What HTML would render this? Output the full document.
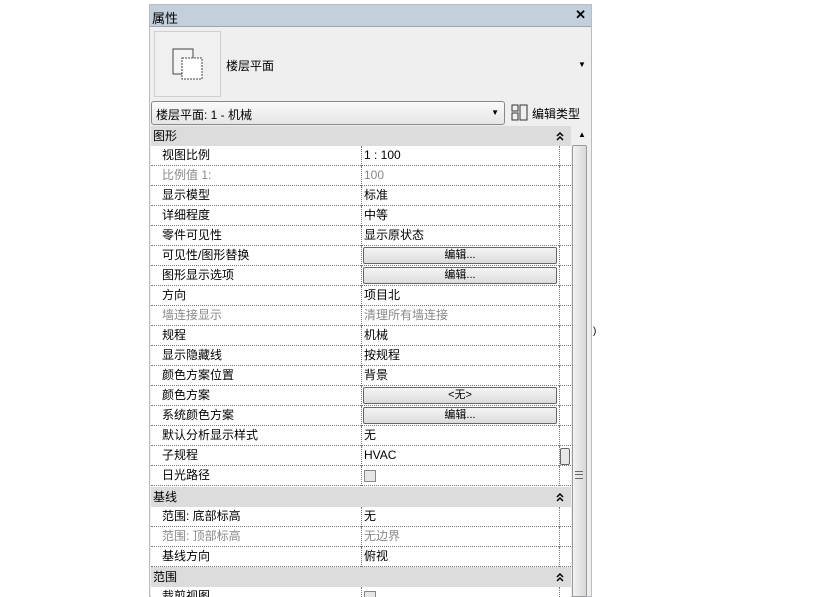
<!DOCTYPE html><html style="overflow:hidden;width:820px;height:597px"><head><meta charset="utf-8"><style>
*{margin:0;padding:0;box-sizing:border-box}
body{width:820px;height:597px;background:#fff;position:relative;overflow:hidden;font-family:"Liberation Sans","Noto Sans CJK SC",sans-serif;font-size:12px;color:#000}
.a{position:absolute}
.row{position:absolute;left:151px;width:420px;height:20px;border-bottom:1px dotted #777;line-height:19px}
.row .n{position:absolute;left:11px;top:0}
.row .v{position:absolute;left:210px;top:0;width:198px;height:20px;border-left:1px dotted #777;padding:0 0 0 2px}
.row .e{position:absolute;left:408px;top:0;height:20px;border-left:1px dotted #777}
.g{color:#888}
.grp{position:absolute;left:151px;width:420px;height:20px;background:#dcdcdc;padding:0 0 0 2px;line-height:20px}
.grp svg{position:absolute;right:7px;top:5px}
.btn{position:absolute;left:1px;top:1px;width:194px;height:17px;border:1px solid #666;border-radius:2px;background:linear-gradient(#f4f4f4,#dcdcdc);text-align:center;font-size:11px;line-height:15px}
</style></head><body>
<div class="a" style="left:149px;top:4px;width:443px;height:593px;background:#efeff0;border:1px solid #b8bcc4"></div>
<div class="a" style="left:150px;top:5px;width:441px;height:22px;background:#c3cfdb;border-bottom:1px solid #9aa6b2;font-size:13px;padding:3px 0 0 2px">属性<span style="position:absolute;right:5px;top:2px;font-weight:bold">✕</span></div>
<div class="a" style="left:154px;top:31px;width:67px;height:66px;border:1px solid #d0d0d0;background:#f0f0f0"></div>
<svg class="a" style="left:172px;top:46px" width="34" height="34"><rect x="1" y="3" width="20" height="25" fill="#f4f4f4" stroke="#444"/><rect x="10" y="12" width="20" height="21" fill="#fff" stroke="#444" stroke-dasharray="2,1"/></svg>
<div class="a" style="left:226px;top:57px">楼层平面</div>
<div class="a" style="left:578px;top:60px;font-size:8px">▼</div>
<div class="a" style="left:151px;top:101px;width:354px;height:24px;border:1px solid #888;border-radius:3px;background:linear-gradient(#fafafa,#e6e6e6);padding:4px 0 0 4px">楼层平面: 1 - 机械<span style="position:absolute;right:5px;top:6px;font-size:8px">▼</span></div>
<svg class="a" style="left:511px;top:104px" width="18" height="18"><rect x="1" y="1" width="6" height="6" fill="none" stroke="#333"/><rect x="1" y="9" width="6" height="7" fill="none" stroke="#333"/><rect x="9" y="1" width="7" height="15" fill="none" stroke="#333"/></svg>
<div class="a" style="left:532px;top:105px">编辑类型</div>
<div class="grp" style="top:126px">图形<svg width="8" height="10"><path d="M1 5L4 2L7 5M1 9L4 6L7 9" fill="none" stroke="#000" stroke-width="1.5"/></svg></div>
<div class="a" style="left:578px;top:130px;font-size:8px">▲</div>
<div class="a" style="left:572px;top:145px;width:15px;height:452px;border:1px solid #999;border-radius:2px;background:linear-gradient(90deg,#f2f2f2,#d8d8d8)"></div>
<div class="a" style="left:575px;top:471px;width:8px;height:8px;border-top:1px solid #666;border-bottom:1px solid #666"><div style="margin-top:2px;border-top:1px solid #666"></div></div>
<div class="a" style="left:151px;top:146px;width:420px;height:341px;background:#fff"></div>
<div class="row" style="top:146px"><span class="n">视图比例</span><span class="v">1 : 100</span><span class="e"></span></div>
<div class="row" style="top:166px"><span class="n g">比例值 1:</span><span class="v g">100</span><span class="e"></span></div>
<div class="row" style="top:186px"><span class="n">显示模型</span><span class="v">标准</span><span class="e"></span></div>
<div class="row" style="top:206px"><span class="n">详细程度</span><span class="v">中等</span><span class="e"></span></div>
<div class="row" style="top:226px"><span class="n">零件可见性</span><span class="v">显示原状态</span><span class="e"></span></div>
<div class="row" style="top:246px"><span class="n">可见性/图形替换</span><span class="v"><span class="btn">编辑...</span></span><span class="e"></span></div>
<div class="row" style="top:266px"><span class="n">图形显示选项</span><span class="v"><span class="btn">编辑...</span></span><span class="e"></span></div>
<div class="row" style="top:286px"><span class="n">方向</span><span class="v">项目北</span><span class="e"></span></div>
<div class="row" style="top:306px"><span class="n g">墙连接显示</span><span class="v g">清理所有墙连接</span><span class="e"></span></div>
<div class="row" style="top:326px"><span class="n">规程</span><span class="v">机械</span><span class="e"></span></div>
<div class="row" style="top:346px"><span class="n">显示隐藏线</span><span class="v">按规程</span><span class="e"></span></div>
<div class="row" style="top:366px"><span class="n">颜色方案位置</span><span class="v">背景</span><span class="e"></span></div>
<div class="row" style="top:386px"><span class="n">颜色方案</span><span class="v"><span class="btn">&lt;无&gt;</span></span><span class="e"></span></div>
<div class="row" style="top:406px"><span class="n">系统颜色方案</span><span class="v"><span class="btn">编辑...</span></span><span class="e"></span></div>
<div class="row" style="top:426px"><span class="n">默认分析显示样式</span><span class="v">无</span><span class="e"></span></div>
<div class="row" style="top:446px"><span class="n">子规程</span><span class="v">HVAC</span><span class="e"></span></div>
<div class="a" style="left:560px;top:448px;width:10px;height:17px;border:1px solid #666;border-radius:2px;background:#e8e8e8"></div>
<div class="row" style="top:466px"><span class="n">日光路径</span><span class="v"><span style="display:inline-block;width:12px;height:12px;border:1px solid #888;background:#e6e6e6;vertical-align:middle"></span></span><span class="e"></span></div>
<div class="grp" style="top:487px">基线<svg width="8" height="10"><path d="M1 5L4 2L7 5M1 9L4 6L7 9" fill="none" stroke="#000" stroke-width="1.5"/></svg></div>
<div class="a" style="left:151px;top:507px;width:420px;height:60px;background:#fff"></div>
<div class="row" style="top:507px"><span class="n">范围: 底部标高</span><span class="v">无</span><span class="e"></span></div>
<div class="row" style="top:527px"><span class="n g">范围: 顶部标高</span><span class="v g">无边界</span><span class="e"></span></div>
<div class="row" style="top:547px"><span class="n">基线方向</span><span class="v">俯视</span><span class="e"></span></div>
<div class="grp" style="top:567px">范围<svg width="8" height="10"><path d="M1 5L4 2L7 5M1 9L4 6L7 9" fill="none" stroke="#000" stroke-width="1.5"/></svg></div>
<div class="a" style="left:151px;top:587px;width:420px;height:10px;background:#fff;overflow:hidden"><div class="row" style="top:0;left:0"><span class="n">裁剪视图</span><span class="v"><span style="display:inline-block;width:12px;height:12px;border:1px solid #888;background:#e6e6e6;vertical-align:middle"></span></span><span class="e"></span></div></div>
<div class="a" style="left:593px;top:326px;font-size:10px">)</div>
</body></html>
